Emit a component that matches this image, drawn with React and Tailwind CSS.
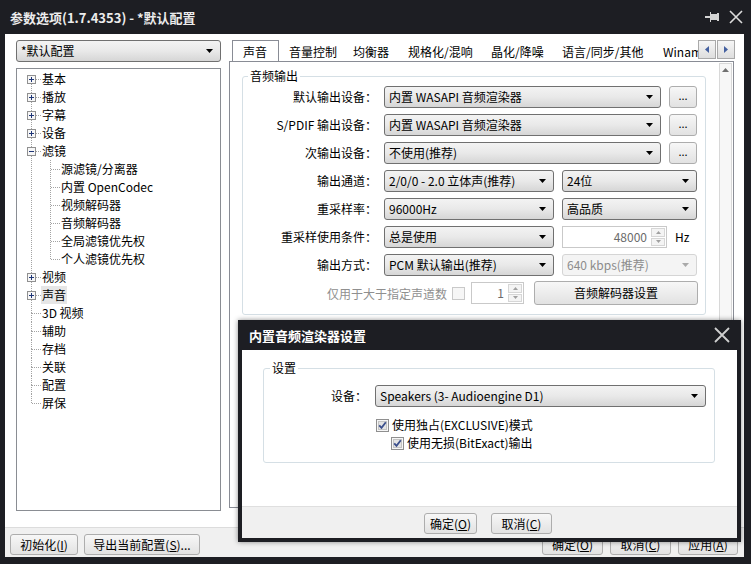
import clsx from 'clsx';

const FONT = "font-['Noto_Sans_CJK_SC','Noto_Sans',sans-serif]";

const DownArrow = ({ disabled }) => (
  <svg width="7" height="4" viewBox="0 0 7 4" className="shrink-0">
    <path d="M0 0h7L3.5 4z" fill={disabled ? '#a9a9a9' : '#000'} />
  </svg>
);

const Combo = ({ className, text, disabled }) => (
  <div
    className={clsx(
      'h-[22px] shrink-0 flex items-center rounded-[3px] border pl-[4px] pr-[7px]',
      disabled
        ? 'border-[#d5d5d5] bg-[#f4f4f4] text-[#8c8c8c]'
        : 'border-[#707070] bg-linear-to-b from-[#f3f3f3] via-[#e9e9e9] to-[#d6d6d6] text-black',
      className
    )}
  >
    <span className="flex-1 truncate leading-[20px]">{text}</span>
    <DownArrow disabled={disabled} />
  </div>
);

const Btn = ({ className, children }) => (
  <div
    className={clsx(
      'shrink-0 flex items-center justify-center rounded-[3px] border border-[#adadad] bg-linear-to-b from-[#f7f7f7] to-[#e2e2e2] text-black leading-none',
      className
    )}
  >
    {children}
  </div>
);

const SpinArrow = ({ up }) => (
  <svg width="5" height="3" viewBox="0 0 5 3">
    <path d={up ? 'M0 3h5L2.5 0z' : 'M0 0h5L2.5 3z'} fill="#a0a0a0" />
  </svg>
);

const Spin = ({ className, value }) => (
  <div className={clsx('h-[22px] shrink-0 flex items-stretch border border-[#c9c9c9] bg-white', className)}>
    <span className="flex-1 text-right pr-[4px] leading-[20px] text-[#6b6b6b]">{value}</span>
    <div className="w-[15px] flex flex-col gap-[1px] py-[1px] pr-[1px]">
      <div className="flex-1 border border-[#d6d6d6] bg-[#f4f4f4] flex items-center justify-center">
        <SpinArrow up />
      </div>
      <div className="flex-1 border border-[#d6d6d6] bg-[#f4f4f4] flex items-center justify-center">
        <SpinArrow />
      </div>
    </div>
  </div>
);

const Check = ({ checked, disabled }) => (
  <svg width="13" height="13" viewBox="0 0 13 13" className="shrink-0">
    <rect x="0.5" y="0.5" width="12" height="12" fill="#f6f6f6" stroke={disabled ? '#c9c9c9' : '#8f8f8f'} />
    {!disabled && <rect x="2.5" y="2.5" width="8" height="8" fill="#e4e4e4" stroke="#c4c4c4" />}
    {checked && <path d="M3.2 6.3l2.3 2.6L9.8 3.2" stroke="#3b4f8c" strokeWidth="1.8" fill="none" />}
  </svg>
);

const dot = { stroke: '#a3a3a3', strokeDasharray: '1 1', shapeRendering: 'crispEdges' };

const RootGutter = ({ exp, first, last }) => (
  <svg width="20" height="18" className="shrink-0">
    {!first && <line x1="9.5" y1="0" x2="9.5" y2={exp ? 5 : 9} {...dot} />}
    {!last && <line x1="9.5" y1={exp ? 14 : 9} x2="9.5" y2="18" {...dot} />}
    <line x1={exp ? 14 : 10} y1="9.5" x2="19" y2="9.5" {...dot} />
    {exp && (
      <g shapeRendering="crispEdges">
        <rect x="5.5" y="5.5" width="8" height="8" fill="#f7f7f7" stroke="#909090" />
        <line x1="7" y1="9.5" x2="12" y2="9.5" stroke="#1f3677" />
        {exp === '+' && <line x1="9.5" y1="7" x2="9.5" y2="12" stroke="#1f3677" />}
      </g>
    )}
  </svg>
);

const ChildGutter = ({ last }) => (
  <svg width="39" height="18" className="shrink-0">
    <line x1="9.5" y1="0" x2="9.5" y2="18" {...dot} />
    <line x1="28.5" y1="0" x2="28.5" y2={last ? 10 : 18} {...dot} />
    <line x1="29" y1="9.5" x2="38" y2="9.5" {...dot} />
  </svg>
);

const tree = [
  { t: '基本', exp: '+', first: true },
  { t: '播放', exp: '+' },
  { t: '字幕', exp: '+' },
  { t: '设备', exp: '+' },
  { t: '滤镜', exp: '-' },
  { t: '源滤镜/分离器', child: true },
  { t: '内置 OpenCodec', child: true },
  { t: '视频解码器', child: true },
  { t: '音频解码器', child: true },
  { t: '全局滤镜优先权', child: true },
  { t: '个人滤镜优先权', child: true, last: true },
  { t: '视频', exp: '+' },
  { t: '声音', exp: '+', sel: true },
  { t: '3D 视频' },
  { t: '辅助' },
  { t: '存档' },
  { t: '关联' },
  { t: '配置' },
  { t: '屏保', last: true },
];

const tabs = [
  { t: '音量控制', w: 'w-[64px]' },
  { t: '均衡器', w: 'w-[55px]' },
  { t: '规格化/混响', w: 'w-[83px]' },
  { t: '晶化/降噪', w: 'w-[71px]' },
  { t: '语言/同步/其他', w: 'w-[101px]' },
  { t: 'Winamp', w: 'w-[60px]' },
];

const Label = ({ children }) => (
  <span className="w-[134px] shrink-0 text-right whitespace-nowrap leading-[22px] mr-[7px]">{children}</span>
);

const TabArrow = ({ right }) => (
  <div className="w-[18px] h-[19px] border border-[#a9a9a9] bg-linear-to-b from-[#f6f6f6] to-[#dedede] flex items-center justify-center">
    <svg width="4" height="7" viewBox="0 0 4 7">
      <path d={right ? 'M0 0v7l4-3.5z' : 'M4 0v7L0 3.5z'} fill="#4460a0" />
    </svg>
  </div>
);

export default function App() {
  return (
    <div className={clsx('w-[751px] h-[564px] bg-[#1d1e23] relative overflow-hidden text-[12px] text-black', FONT)}>
      {/* title bar */}
      <div className="h-[34px] flex items-center pl-[10px] pr-[8px]">
        <span className="text-[13px] font-bold text-[#ececec] leading-none">参数选项(1.7.4353) - *默认配置</span>
        <svg width="14" height="12" viewBox="0 0 14 12" className="ml-auto">
          <rect x="0" y="5" width="5" height="2" fill="#d4d4d4" />
          <rect x="5" y="1" width="1" height="10" fill="#d4d4d4" />
          <rect x="6" y="3" width="6" height="6" fill="#d4d4d4" />
          <rect x="12" y="2" width="2" height="8" fill="#d4d4d4" />
        </svg>
        <svg width="14" height="14" viewBox="0 0 14 14" className="ml-[10px]">
          <path d="M1 1l12 12M13 1L1 13" stroke="#dcdcdc" strokeWidth="1.6" />
        </svg>
      </div>

      {/* client */}
      <div className="ml-[5px] mr-[7px] h-[523px] bg-white flex flex-col">
        <div className="h-[493px] flex pt-[6px] pl-[11px]">
          {/* left column */}
          <div className="w-[205px] flex flex-col">
            <Combo className="w-[205px]" text="*默认配置" />
            <div className="mt-[6px] h-[443px] border border-[#8a8d93] pt-[1px] pl-[5px]">
              {tree.map((n) => (
                <div key={n.t} className="h-[18px] flex items-center">
                  {n.child ? <ChildGutter last={n.last} /> : <RootGutter exp={n.exp} first={n.first} last={n.last} />}
                  <span className={clsx('leading-[18px] whitespace-nowrap', n.sel && 'bg-[#e6e6e6] px-[1px] -ml-[1px]')}>{n.t}</span>
                </div>
              ))}
            </div>
          </div>

          {/* right column */}
          <div className="ml-[8px] w-[506px] flex flex-col">
            <div className="h-[21px] flex pl-[3px]">
              <div className="w-[466px] flex overflow-hidden">
                <div className="relative z-10 w-[47px] h-[22px] shrink-0 border border-b-0 border-[#898c95] bg-white pl-[10px] leading-[21px]">
                  声音
                </div>
                <div className="w-[10px] shrink-0" />
                {tabs.map((t) => (
                  <div key={t.t} className={clsx('shrink-0 whitespace-nowrap leading-[21px] pt-[1px]', t.w)}>
                    {t.t}
                  </div>
                ))}
              </div>
              <div className="flex gap-[1px]">
                <TabArrow />
                <TabArrow right />
              </div>
            </div>

            <div className="h-[447px] w-[505px] border border-[#898c95] flex">
              <div className="flex-1 pl-[12px] pt-[6px]">
                <fieldset className="w-[464px] border border-[#d5dfe5] rounded-[3px] pb-[9px]">
                  <legend className="ml-[5px] px-[2px] leading-[16px]">音频输出</legend>
                  <div className="flex flex-col gap-[6px] pt-[2px]">
                    <div className="flex items-center">
                      <Label>默认输出设备：</Label>
                      <Combo className="w-[277px]" text="内置 WASAPI 音频渲染器" />
                      <Btn className="ml-[8px] w-[28px] h-[22px] text-[11px] pb-[3px]">...</Btn>
                    </div>
                    <div className="flex items-center">
                      <Label>S/PDIF 输出设备：</Label>
                      <Combo className="w-[277px]" text="内置 WASAPI 音频渲染器" />
                      <Btn className="ml-[8px] w-[28px] h-[22px] text-[11px] pb-[3px]">...</Btn>
                    </div>
                    <div className="flex items-center">
                      <Label>次输出设备：</Label>
                      <Combo className="w-[277px]" text="不使用(推荐)" />
                      <Btn className="ml-[8px] w-[28px] h-[22px] text-[11px] pb-[3px]">...</Btn>
                    </div>
                    <div className="flex items-center">
                      <Label>输出通道：</Label>
                      <Combo className="w-[170px]" text="2/0/0 - 2.0 立体声(推荐)" />
                      <Combo className="ml-[8px] w-[135px]" text="24位" />
                    </div>
                    <div className="flex items-center">
                      <Label>重采样率：</Label>
                      <Combo className="w-[170px]" text="96000Hz" />
                      <Combo className="ml-[8px] w-[135px]" text="高品质" />
                    </div>
                    <div className="flex items-center">
                      <Label>重采样使用条件：</Label>
                      <Combo className="w-[170px]" text="总是使用" />
                      <Spin className="ml-[8px] w-[105px]" value="48000" />
                      <span className="ml-[8px] leading-[22px]">Hz</span>
                    </div>
                    <div className="flex items-center">
                      <Label>输出方式：</Label>
                      <Combo className="w-[170px]" text="PCM 默认输出(推荐)" />
                      <Combo className="ml-[8px] w-[135px]" disabled text="640 kbps(推荐)" />
                    </div>
                    <div className="flex items-center -mt-[1px]">
                      <span className="w-[204px] shrink-0 text-right text-[#8f8f8f] leading-[23px]">仅用于大于指定声道数</span>
                      <span className="ml-[5px] flex">
                        <Check disabled />
                      </span>
                      <Spin className="ml-[6px] w-[53px]" value="1" />
                      <Btn className="ml-[10px] w-[164px] h-[24px]">音频解码器设置</Btn>
                    </div>
                  </div>
                </fieldset>
              </div>
              <div className="w-[13px] my-[1px] mr-[1px] border border-[#d8d8d8] bg-[#f7f7f7] flex justify-center pt-[4px]">
                <svg width="7" height="4" viewBox="0 0 7 4">
                  <path d="M0 4h7L3.5 0z" fill="#707070" />
                </svg>
              </div>
            </div>
          </div>
        </div>

        {/* bottom bar */}
        <div className="h-[30px] border-t border-[#dcdcdc] bg-[#f0f0f0] flex items-start pt-[6px] pl-[5px] pr-[6px]">
          <Btn className="w-[68px] h-[21px]">
            初始化(<span className="underline">I</span>)
          </Btn>
          <Btn className="ml-[6px] w-[116px] h-[21px]">
            导出当前配置(<span className="underline">S</span>)...
          </Btn>
          <div className="ml-auto flex gap-[7px]">
            <Btn className="w-[61px] h-[21px]">
              确定(<span className="underline">O</span>)
            </Btn>
            <Btn className="w-[61px] h-[21px]">
              取消(<span className="underline">C</span>)
            </Btn>
            <Btn className="w-[60px] h-[21px]">
              应用(<span className="underline">A</span>)
            </Btn>
          </div>
        </div>
      </div>

      {/* modal dialog */}
      <div className="absolute left-[238px] top-[320px] w-[503px] h-[222px] bg-[#1d1e23] flex flex-col shadow-[0_0_5px_rgba(0,0,0,0.45)]">
        <div className="h-[30px] shrink-0 flex items-center pl-[11px] pr-[11px]">
          <span className="text-[13px] font-bold text-white leading-none">内置音频渲染器设置</span>
          <svg width="16" height="16" viewBox="0 0 16 16" className="ml-auto">
            <path d="M1 1l14 14M15 1L1 15" stroke="#cfcfcf" strokeWidth="1.8" />
          </svg>
        </div>
        <div className="mx-[4px] mb-[4px] flex-1 flex flex-col bg-white">
          <div className="h-[156px] shrink-0 pt-[10px] pl-[21px]">
            <fieldset className="w-[452px] border border-[#d5dfe5] rounded-[3px] pb-[10px]">
              <legend className="ml-[6px] px-[2px] leading-[16px]">设置</legend>
              <div className="flex items-center mt-[9px]">
                <span className="w-[103px] shrink-0 text-right leading-[22px]">设备：</span>
                <Combo className="ml-[8px] w-[331px]" text="Speakers (3- Audioengine D1)" />
              </div>
              <div className="flex items-center h-[18px] mt-[9px] pl-[112px]">
                <Check checked />
                <span className="ml-[3px] leading-[18px]">使用独占(EXCLUSIVE)模式</span>
              </div>
              <div className="flex items-center h-[18px] pl-[127px]">
                <Check checked />
                <span className="ml-[3px] leading-[18px]">使用无损(BitExact)输出</span>
              </div>
            </fieldset>
          </div>
          <div className="flex-1 bg-[#f0f0f0] border-t border-[#dfdfdf] flex justify-center gap-[14px] pt-[6px] pr-[3px]">
            <Btn className="w-[53px] h-[21px]">
              确定(<span className="underline">O</span>)
            </Btn>
            <Btn className="w-[61px] h-[21px]">
              取消(<span className="underline">C</span>)
            </Btn>
          </div>
        </div>
      </div>
    </div>
  );
}
